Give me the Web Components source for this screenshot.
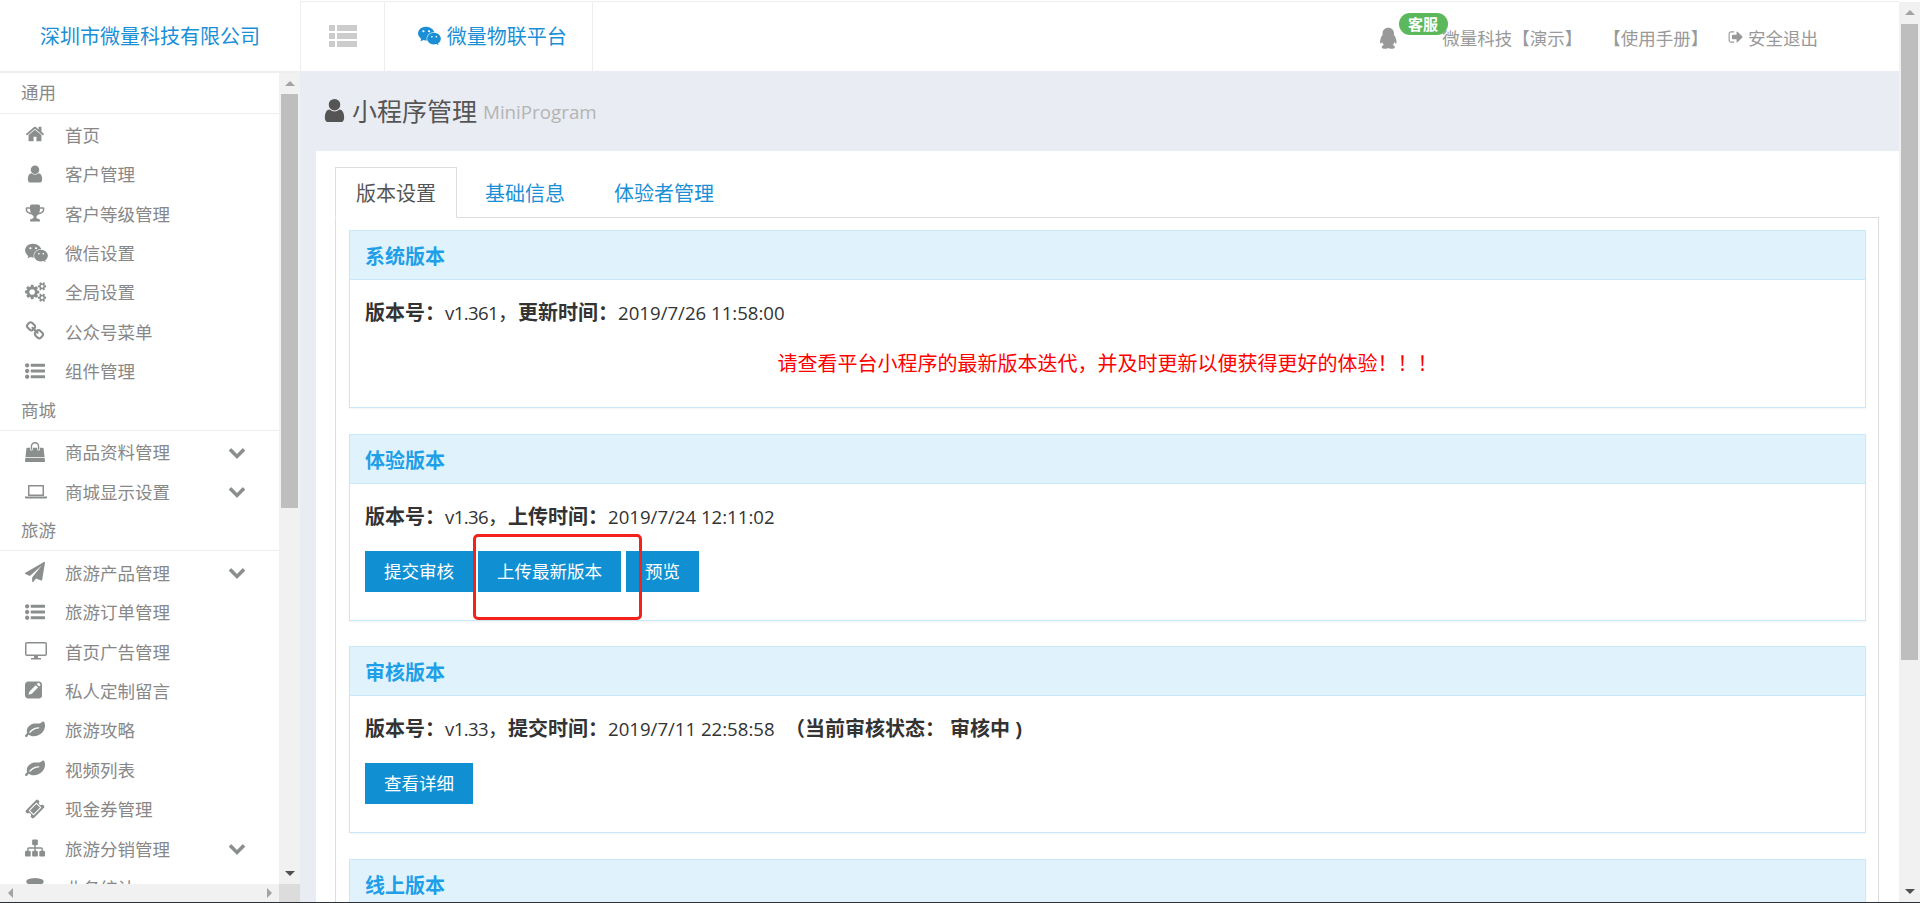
<!DOCTYPE html>
<html lang="zh">
<head>
<meta charset="utf-8">
<title>小程序管理</title>
<style>
  html, body { margin: 0; height: 903px; overflow: hidden; background: #fff; }
  body { font-family: "Open Sans", "Noto Sans CJK SC", sans-serif; font-size: 17.5px; color: #333; }
</style>
</head>
<body>
<app-shell>
  <top-bar slot="top"></top-bar>
  <side-nav slot="side">
    <nav-label>通用</nav-label>
    <nav-item icon="home">首页</nav-item>
    <nav-item icon="user">客户管理</nav-item>
    <nav-item icon="trophy">客户等级管理</nav-item>
    <nav-item icon="wechat">微信设置</nav-item>
    <nav-item icon="gears">全局设置</nav-item>
    <nav-item icon="link">公众号菜单</nav-item>
    <nav-item icon="list">组件管理</nav-item>
    <nav-label>商城</nav-label>
    <nav-item icon="bag" more>商品资料管理</nav-item>
    <nav-item icon="laptop" more>商城显示设置</nav-item>
    <nav-label>旅游</nav-label>
    <nav-item icon="plane" more>旅游产品管理</nav-item>
    <nav-item icon="list">旅游订单管理</nav-item>
    <nav-item icon="desktop">首页广告管理</nav-item>
    <nav-item icon="pencil">私人定制留言</nav-item>
    <nav-item icon="leaf">旅游攻略</nav-item>
    <nav-item icon="leaf">视频列表</nav-item>
    <nav-item icon="ticket">现金券管理</nav-item>
    <nav-item icon="sitemap" more>旅游分销管理</nav-item>
    <nav-item icon="database">业务统计</nav-item>
  </side-nav>
  <main-pane slot="main">
    <ver-panel heading="系统版本">
      <b>版本号&#xFF1A;</b><span class="ver">v1.361</span>&#xFF0C;<b>更新时间&#xFF1A;</b><span class="num">2019/7/26 11:58:00</span>
      <p slot="note">请查看平台小程序的最新版本迭代&#xFF0C;并及时更新以便获得更好的体验&#xFF01;&#xFF01;&#xFF01;</p>
    </ver-panel>
    <ver-panel heading="体验版本">
      <b>版本号&#xFF1A;</b><span class="ver">v1.36</span>&#xFF0C;<b>上传时间&#xFF1A;</b><span class="num">2019/7/24 12:11:02</span>
      <btn-row slot="actions" marked>
        <act-btn>提交审核</act-btn><act-btn>上传最新版本</act-btn><act-btn>预览</act-btn>
      </btn-row>
    </ver-panel>
    <ver-panel heading="审核版本">
      <b>版本号&#xFF1A;</b><span class="ver">v1.33</span>&#xFF0C;<b>提交时间&#xFF1A;</b><span class="num">2019/7/11 22:58:58</span>&nbsp; <b>&#xFF08;当前审核状态&#xFF1A; 审核中 )</b>
      <btn-row slot="actions"><act-btn>查看详细</act-btn></btn-row>
    </ver-panel>
    <ver-panel heading="线上版本"></ver-panel>
  </main-pane>
  <v-scroll slot="page" before="1" len="636"></v-scroll>
</app-shell>

<script>
const ICONS = {
  home: ['0 0 1792 1792', 'M1472 992v480q0 26-19 45t-45 19h-384v-384h-256v384h-384q-26 0-45-19t-19-45v-480q0-1 .5-3t.5-3l575-474 575 474q1 2 1 6zm223-69l-62 74q-8 9-21 11h-3q-13 0-21-7l-692-577-692 577q-12 8-24 7-13-2-21-11l-62-74q-8-10-7-23.5t11-21.5l719-599q32-26 76-26t76 26l244 204v-195q0-14 9-23t23-9h192q14 0 23 9t9 23v408l219 182q10 8 11 21.5t-7 23.5z'],
  user: ['0 0 1792 1792', 'M1536 1399q0 109-62.5 187t-150.5 78h-854q-88 0-150.5-78t-62.5-187q0-85 8.5-160.5t31.5-152 58.5-131 94-89 134.5-34.5q131 128 313 128t313-128q76 0 134.5 34.5t94 89 58.5 131 31.5 152 8.5 160.5zm-256-887q0 159-112.5 271.5t-271.5 112.5-271.5-112.5-112.5-271.5 112.5-271.5 271.5-112.5 271.5 112.5 112.5 271.5z'],
  trophy: ['0 0 1792 1792', 'M522 883q-74-162-74-371h-256v96q0 78 94.5 162t235.5 113zm1078-275v-96h-256q0 209-74 371 141-29 235.5-113t94.5-162zm128-128v128q0 71-41.5 143t-112 130-173 97.5-215.5 44.5q-42 54-95 95-38 34-52.5 72.5t-14.5 89.5q0 54 30.5 91t97.5 37q75 0 133.5 45.5t58.5 114.5v64q0 14-9 23t-23 9h-832q-14 0-23-9t-9-23v-64q0-69 58.5-114.5t133.5-45.5q67 0 97.5-37t30.5-91q0-51-14.5-89.5t-52.5-72.5q-53-41-95-95-113-5-215.5-44.5t-173-97.5-112-130-41.5-143v-128q0-40 28-68t68-28h288v-96q0-66 47-113t113-47h576q66 0 113 47t47 113v96h288q40 0 68 28t28 68z'],
  wechat: ['0 0 2048 1792', 'M580 461q0-41-25-66t-66-25q-43 0-76 25.5t-33 65.5q0 39 33 64.5t76 25.5q41 0 66-24.5t25-65.5zm743 507q0-28-25.5-50t-65.5-22q-27 0-49.5 22.5t-22.5 49.5q0 28 22.5 50.5t49.5 22.5q40 0 65.5-22t25.5-51zm-236-507q0-41-24.5-66t-65.5-25q-43 0-76 25.5t-33 65.5q0 39 33 64.5t76 25.5q41 0 65.5-24.5t24.5-65.5zm635 507q0-28-26-50t-65-22q-27 0-49.5 22.5t-22.5 49.5q0 28 22.5 50.5t49.5 22.5q39 0 65-22t26-51zm-266-397q-31-4-70-4-169 0-311 77t-223.5 208.5-81.5 287.5q0 78 23 152-35 3-68 3-26 0-50-1.5t-55-6.5-44.5-7-54.5-10.5-50-10.5l-253 127 72-218q-290-203-290-490 0-169 97.5-311t264-223.5 363.5-81.5q176 0 332.5 66t262 182.5 136.5 260.5zm592 561q0 117-68.5 223.5t-185.5 193.5l55 181-199-109q-150 37-218 37-169 0-311-70.5t-223.5-191.5-81.5-264 81.5-264 223.5-191.5 311-70.5q161 0 303 70.5t227.5 191.5 85.5 264z'],
  gears: ['0 0 1920 1792', 'M896 896q0-106-75-181t-181-75-181 75-75 181 75 181 181 75 181-75 75-181zm768 512q0-52-38-90t-90-38-90 38-38 90q0 53 37.5 90.5t90.5 37.5 90.5-37.5 37.5-90.5zm0-1024q0-52-38-90t-90-38-90 38-38 90q0 53 37.5 90.5t90.5 37.5 90.5-37.5 37.5-90.5zm-384 421v185q0 10-7 19.5t-16 10.5l-155 24q-11 35-32 76 34 48 90 115 7 11 7 20 0 12-7 19-23 30-82.5 89.5t-78.5 59.5q-11 0-21-7l-115-90q-37 19-77 31-11 108-23 155-7 24-30 24h-186q-11 0-20-7.5t-10-17.5l-23-153q-34-10-75-31l-118 89q-7 7-20 7-11 0-21-8-144-133-144-160 0-9 7-19 10-14 41-53t47-61q-23-44-35-82l-152-24q-10-1-17-9.5t-7-19.5v-185q0-10 7-19.5t16-10.5l155-24q11-35 32-76-34-48-90-115-7-11-7-20 0-12 7-20 22-30 82-89t79-59q11 0 21 7l115 90q34-18 77-32 11-108 23-154 7-24 30-24h186q11 0 20 7.5t10 17.5l23 153q34 10 75 31l118-89q8-7 20-7 11 0 21 8 144 133 144 160 0 8-7 19-12 16-42 54t-45 60q23 48 34 82l152 23q10 2 17 10.5t7 19.5zm640 533v140q0 16-149 31-12 27-30 52 51 113 51 138 0 4-4 7-122 71-124 71-8 0-46-47t-52-68q-20 2-30 2t-30-2q-14 21-52 68t-46 47q-2 0-124-71-4-3-4-7 0-25 51-138-18-25-30-52-149-15-149-31v-140q0-16 149-31 13-29 30-52-51-113-51-138 0-4 4-7 4-2 35-20t59-34 30-16q8 0 46 46.5t52 67.5q20-2 30-2t30 2q51-71 92-112l6-2q4 0 124 70 4 3 4 7 0 25-51 138 17 23 30 52 149 15 149 31zm0-1024v140q0 16-149 31-12 27-30 52 51 113 51 138 0 4-4 7-122 71-124 71-8 0-46-47t-52-68q-20 2-30 2t-30-2q-14 21-52 68t-46 47q-2 0-124-71-4-3-4-7 0-25 51-138-18-25-30-52-149-15-149-31v-140q0-16 149-31 13-29 30-52-51-113-51-138 0-4 4-7 4-2 35-20t59-34 30-16q8 0 46 46.5t52 67.5q20-2 30-2t30 2q51-71 92-112l6-2q4 0 124 70 4 3 4 7 0 25-51 138 17 23 30 52 149 15 149 31z'],
  link: ['0 0 1792 1792', 'M1520 1216q0-40-28-68l-208-208q-28-28-68-28-42 0-72 32 3 3 19 18.5t21.5 21.5 15 19 13 25.5 3.5 27.5q0 40-28 68t-68 28q-15 0-27.5-3.5t-25.5-13-19-15-21.5-21.5-18.5-19q-33 31-33 73 0 40 28 68l206 207q27 27 68 27 40 0 68-26l147-146q28-28 28-67zm-703-705q0-40-28-68l-206-207q-28-28-68-28-39 0-68 27l-147 146q-28 28-28 67 0 40 28 68l208 208q27 27 68 27 42 0 72-31-3-3-19-18.5t-21.5-21.5-15-19-13-25.5-3.5-27.5q0-40 28-68t68-28q15 0 27.5 3.5t25.5 13 19 15 21.5 21.5 18.5 19q33-31 33-73zm895 705q0 120-85 203l-147 146q-83 83-203 83-121 0-204-85l-206-207q-83-83-83-203 0-123 88-209l-88-88q-86 88-208 88-120 0-204-84l-208-208q-84-84-84-204t85-203l147-146q83-83 203-83 121 0 204 85l206 207q83 83 83 203 0 123-88 209l88 88q86-88 208-88 120 0 204 84l208 208q84 84 84 204z'],
  list: ['0 0 1792 1792', 'M384 1408q0 80-56 136t-136 56-136-56-56-136 56-136 136-56 136 56 56 136zm0-512q0 80-56 136t-136 56-136-56-56-136 56-136 136-56 136 56 56 136zm1408 416v192q0 13-9.5 22.5t-22.5 9.5h-1216q-13 0-22.5-9.5t-9.5-22.5v-192q0-13 9.5-22.5t22.5-9.5h1216q13 0 22.5 9.5t9.5 22.5zm-1408-928q0 80-56 136t-136 56-136-56-56-136 56-136 136-56 136 56 56 136zm1408 416v192q0 13-9.5 22.5t-22.5 9.5h-1216q-13 0-22.5-9.5t-9.5-22.5v-192q0-13 9.5-22.5t22.5-9.5h1216q13 0 22.5 9.5t9.5 22.5zm0-512v192q0 13-9.5 22.5t-22.5 9.5h-1216q-13 0-22.5-9.5t-9.5-22.5v-192q0-13 9.5-22.5t22.5-9.5h1216q13 0 22.5 9.5t9.5 22.5z'],
  bag: ['0 0 1792 1792', 'M1757 1408l35 313q3 28-16 50-19 21-48 21h-1664q-29 0-48-21-19-22-16-50l35-313h1722zm-93-839l86 775h-1708l86-775q3-24 21-40.5t43-16.5h256v128q0 53 37.5 90.5t90.5 37.5 90.5-37.5 37.5-90.5v-128h384v128q0 53 37.5 90.5t90.5 37.5 90.5-37.5 37.5-90.5v-128h256q25 0 43 16.5t21 40.5zm-384-185v256q0 26-19 45t-45 19-45-19-19-45v-256q0-106-75-181t-181-75-181 75-75 181v256q0 26-19 45t-45 19-45-19-19-45v-256q0-159 112.5-271.5t271.5-112.5 271.5 112.5 112.5 271.5z'],
  laptop: ['0 0 22 20', 'M3 4h16v11H3z M4.5 5.5v8h13v-8z M0 15.5h22v1a1 1 0 0 1-1 1H1a1 1 0 0 1-1-1z'],
  plane: ['0 0 1792 1792', 'M1764 11q33 24 27 64l-256 1536q-5 29-32 45-14 8-31 8-11 0-24-5l-453-185-242 295q-18 23-49 23-13 0-22-4-19-7-30.5-23.5t-11.5-36.5v-349l864-1059-1069 925-395-162q-37-14-40-55-2-40 32-59l1664-960q15-9 32-9 20 0 36 11z'],
  desktop: ['0 -1 22 20', 'M2 0h18a2 2 0 0 1 2 2v10a2 2 0 0 1-2 2H13v2h3v1.5H6V16h3v-2H2a2 2 0 0 1-2-2V2a2 2 0 0 1 2-2z M2 1.5a.5.5 0 0 0-.5.5v10a.5.5 0 0 0 .5.5h18a.5.5 0 0 0 .5-.5V2a.5.5 0 0 0-.5-.5z'],
  pencil: ['0 0 1536 1792', 'M288 128h960q119 0 203.5 84.5t84.5 203.5v960q0 119-84.5 203.5t-203.5 84.5h-960q-119 0-203.5-84.5t-84.5-203.5v-960q0-119 84.5-203.5t203.5-84.5zm672 340l-560 560-90 300 300-90 560-560zm96-96l210 210 96-96q28-28 28-58t-28-58l-94-94q-28-28-58-28t-58 28z'],
  leaf: ['0 0 1792 1792', 'M1280 704q0-26-19-45t-45-19q-172 0-318 49.5t-259.5 134-235.5 219.5q-19 21-19 45 0 26 19 45t45 19q24 0 45-19 27-24 74-71t67-66q137-124 268.5-176t313.5-52q26 0 45-19t19-45zm512-198q0 95-20 193-46 224-184.5 383t-357.5 268q-214 108-438 108-148 0-286-47-15-5-88-42t-96-37q-16 0-39.5 32t-45 70-52.5 70-60 32q-30 0-51-11t-31-24-27-42q-2-4-6-11t-5.5-10-3-9.5-1.5-13.5q0-35 31-73.5t68-65.5 68-56 31-48q0-4-14-38t-16-44q-9-51-9-104 0-115 43.5-220t119-184.5 170.5-139 204-95.5q55-18 145-25.5t179.5-9 178.5-6 163.5-24 113.5-56.5l29.5-29.5 29.5-28 27-20 36.5-16 43.5-4.5q39 0 70.5 46t47.5 112 24 124 8 96z'],
  ticket: ['0 0 1792 1792', 'M1024 452l316 316-572 572-316-316zm-211 979l618-618q19-19 19-45t-19-45l-362-362q-18-18-45-18t-45 18l-618 618q-19 19-19 45t19 45l362 362q18 18 45 18t45-18zm889-637l-907 908q-37 37-90.5 37t-90.5-37l-126-126q56-56 56-136t-56-136-136-56-136 56l-125-126q-37-37-37-90.5t37-90.5l907-906q37-37 90.5-37t90.5 37l125 125q-56 56-56 136t56 136 136 56 136-56l126 125q37 37 37 90.5t-37 90.5z'],
  sitemap: ['0 0 1792 1792', 'M1792 1248v320q0 40-28 68t-68 28h-320q-40 0-68-28t-28-68v-320q0-40 28-68t68-28h96v-192h-512v192h96q40 0 68 28t28 68v320q0 40-28 68t-68 28h-320q-40 0-68-28t-28-68v-320q0-40 28-68t68-28h96v-192h-512v192h96q40 0 68 28t28 68v320q0 40-28 68t-68 28h-320q-40 0-68-28t-28-68v-320q0-40 28-68t68-28h96v-192q0-52 38-90t90-38h512v-192h-96q-40 0-68-28t-28-68v-320q0-40 28-68t68-28h320q40 0 68 28t28 68v320q0 40-28 68t-68 28h-96v192h512q52 0 90 38t38 90v192h96q40 0 68 28t28 68z'],
  database: ['0 0 1792 1792', 'M896 768q237 0 443-43t325-127v170q0 69-103 128t-280 93.5-385 34.5-385-34.5-280-93.5-103-128v-170q119 84 325 127t443 43zm0 768q237 0 443-43t325-127v170q0 69-103 128t-280 93.5-385 34.5-385-34.5-280-93.5-103-128v-170q119 84 325 127t443 43zm0-384q237 0 443-43t325-127v170q0 69-103 128t-280 93.5-385 34.5-385-34.5-280-93.5-103-128v-170q119 84 325 127t443 43zm0-1152q208 0 385 34.5t280 93.5 103 128v128q0 69-103 128t-280 93.5-385 34.5-385-34.5-280-93.5-103-128v-128q0-69 103-128t280-93.5 385-34.5z'],
  chevron: ['0 0 1792 1792', 'M1683 808l-742 741q-19 19-45 19t-45-19l-742-741q-19-19-19-45.5t19-45.5l166-165q19-19 45-19t45 19l531 531 531-531q19-19 45-19t45 19l166 165q19 19 19 45.5t-19 45.5z'],
  signout: ['0 0 1664 1792', 'M704 1440q0 4 1 20t.5 26.5-3 23.5-10 19.5-20.5 6.5h-320q-119 0-203.5-84.5t-84.5-203.5v-704q0-119 84.5-203.5t203.5-84.5h320q13 0 22.5 9.5t9.5 22.5q0 4 1 20t.5 26.5-3 23.5-10 19.5-20.5 6.5h-320q-66 0-113 47t-47 113v704q0 66 47 113t113 47h312l11.5 1 11.5 3 8 5.5 7 9 2 13.5zm928-544q0 26-19 45l-544 544q-19 19-45 19t-45-19-19-45v-288h-448q-26 0-45-19t-19-45v-384q0-26 19-45t45-19h448v-288q0-26 19-45t45-19 45 19l544 544q19 19 19 45z'],
  qq: ['0 0 1536 1792', 'M768 64c-270 0-430 190-430 430 0 40 4 70 8 96-70 60-110 130-130 210-50 170-90 350-50 420 30 40 90-20 140-100 20 90 70 170 140 230-70 30-170 80-170 160 0 90 170 130 300 120 90-10 150-40 192-70 42 30 102 60 192 70 130 10 300-30 300-120 0-80-100-130-170-160 70-60 120-140 140-230 50 80 110 140 140 100 40-70 0-250-50-420-20-80-60-150-130-210 4-26 8-56 8-96 0-240-160-430-430-430z'],
  thlist: ['0 0 28 22', 'M0 0h6v6H0zM8 0h20v6H8zM0 8h6v6H0zM8 8h20v6H8zM0 16h6v6H0zM8 16h20v6H8z']
};

function iconSvg(name, size, color) {
  const [box, d] = ICONS[name];
  const [, , w, h] = box.split(' ').map(Number);
  const width = (size * w / h).toFixed(2);
  return `<svg xmlns="http://www.w3.org/2000/svg" viewBox="${box}" width="${width}" height="${size}" fill="${color}" style="display:block;flex:none"><path d="${d}"/></svg>`;
}

class AppShell extends HTMLElement {
  connectedCallback() {
    this.attachShadow({ mode: 'open' });
    this.shadowRoot.innerHTML = `
      <style>
        :host {
          display: grid;
          grid-template-columns: 300px 1fr 21px;
          grid-template-rows: 73px 1fr 1px;
          height: 903px;
          overflow: hidden;
        }
        .top { grid-column: 1 / 3; grid-row: 1; min-width: 0; }
        .side { grid-column: 1; grid-row: 2; min-height: 0; }
        .main { grid-column: 2; grid-row: 2; min-width: 0; min-height: 0; margin-top: -2px; }
        .page { grid-column: 3; grid-row: 1 / 3; padding-top: 2px; display: flex; }
        .edge { grid-column: 1 / 4; grid-row: 3; background: #2b3136; }
      </style>
      <div class="top"><slot name="top"></slot></div>
      <div class="side"><slot name="side"></slot></div>
      <div class="main"><slot name="main"></slot></div>
      <div class="page"><slot name="page"></slot></div>
      <div class="edge"></div>
    `;
  }
}
customElements.define('app-shell', AppShell);

class TopBar extends HTMLElement {
  connectedCallback() {
    this.attachShadow({ mode: 'open' });
    this.shadowRoot.innerHTML = `
      <style>
        :host {
          display: flex;
          height: 73px;
          box-sizing: border-box;
          padding-top: 1px;
          background: #fff;
          color: #999;
        }
        .cell { display: flex; align-items: center; justify-content: center; height: 70px; box-sizing: border-box; padding-bottom: 3px; }
        .logo { width: 300px; font-size: 20px; color: #1a8fd6; border-bottom: 2px solid #eee; height: 72px; margin-top: 0; padding-bottom: 2px; }
        .rest { flex: 1; display: flex; border-top: 1px solid #eee; }
        .menu { width: 84px; border-left: 1px solid #eee; }
        .plat { width: 209px; border-left: 1px solid #eee; border-right: 1px solid #eee; justify-content: flex-start; padding-left: 33px; gap: 6px; font-size: 20px; color: #1a8fd6; }
        .right { margin-left: auto; display: flex; align-items: center; height: 70px; padding: 0 81px 3px 0; font-size: 17.5px; }
        .qq { position: relative; margin-right: 44px; padding-top: 3px; }
        .badge {
          position: absolute;
          left: 21px;
          top: -11px;
          width: 49px;
          height: 22px;
          border-radius: 11px;
          background: #5cb85c;
          color: #fff;
          font-size: 15px;
          font-weight: 700;
          line-height: 22px;
          text-align: center;
        }
        .who { margin-right: 21px; }
        .help { margin-right: 20px; }
        .out { display: flex; align-items: center; gap: 5px; }
      </style>
      <div class="cell logo">深圳市微量科技有限公司</div>
      <div class="rest">
        <div class="cell menu">${iconSvg('thlist', 22, '#cccccc')}</div>
        <div class="cell plat">${iconSvg('wechat', 20, '#1a8fd6')}<span>微量物联平台</span></div>
        <div class="right">
          <span class="qq">${iconSvg('qq', 24, '#999999')}<span class="badge">客服</span></span>
          <span class="who">微量科技【演示】</span>
          <span class="help">【使用手册】</span>
          <span class="out">${iconSvg('signout', 16, '#999999')}<span>安全退出</span></span>
        </div>
      </div>
    `;
  }
}
customElements.define('top-bar', TopBar);

class SideNav extends HTMLElement {
  connectedCallback() {
    this.attachShadow({ mode: 'open' });
    this.shadowRoot.innerHTML = `
      <style>
        :host {
          display: grid;
          grid-template-columns: 279px 21px;
          grid-template-rows: 1fr 18px;
          height: 100%;
          background: #fff;
        }
        .list { overflow: hidden; min-height: 0; }
        .bar { background: #f1f1f1; display: flex; align-items: center; justify-content: space-between; padding: 0 7px 0 8px; }
        .corner { background: #dcdcdc; }
        i { width: 0; height: 0; border-top: 5px solid transparent; border-bottom: 5px solid transparent; display: block; }
        .l { border-right: 5px solid #a3a3a3; }
        .r { border-left: 5px solid #a3a3a3; }
      </style>
      <div class="list"><slot></slot></div>
      <v-scroll before="0" len="414"></v-scroll>
      <div class="bar"><i class="l"></i><i class="r"></i></div>
      <div class="corner"></div>
    `;
  }
}
customElements.define('side-nav', SideNav);

class NavLabel extends HTMLElement {
  connectedCallback() {
    this.attachShadow({ mode: 'open' });
    this.shadowRoot.innerHTML = `
      <style>
        :host {
          display: block;
          height: 40.5px;
          margin-bottom: 1px;
          line-height: 38px;
          box-sizing: border-box;
          padding-left: 21px;
          border-bottom: 1px solid #eee;
          font-size: 17.5px;
          color: #888;
        }
      </style>
      <slot></slot>
    `;
  }
}
customElements.define('nav-label', NavLabel);

class NavItem extends HTMLElement {
  connectedCallback() {
    this.attachShadow({ mode: 'open' });
    const name = this.getAttribute('icon');
    const more = this.hasAttribute('more');
    this.shadowRoot.innerHTML = `
      <style>
        :host {
          display: flex;
          align-items: center;
          height: 39.45px;
          font-size: 17.5px;
          color: #888;
        }
        .ic { width: 40px; margin-left: 25px; flex: none; }
        .more { margin-left: auto; margin-right: 33px; }
      </style>
      <span class="ic">${iconSvg(name, 20, '#8a8f8d')}</span>
      <span><slot></slot></span>
      ${more ? `<span class="more">${iconSvg('chevron', 18, '#8a8f8d')}</span>` : ''}
    `;
  }
}
customElements.define('nav-item', NavItem);

class VScroll extends HTMLElement {
  connectedCallback() {
    this.attachShadow({ mode: 'open' });
    const before = this.getAttribute('before') || 0;
    const len = this.getAttribute('len') || 100;
    this.shadowRoot.innerHTML = `
      <style>
        :host {
          display: flex;
          flex-direction: column;
          width: 21px;
          background: #f1f1f1;
          height: 100%;
        }
        .arrow { height: 21px; flex: none; display: flex; align-items: center; justify-content: center; }
        .thumb { background: #bebebe; margin: ${before}px 2px 0; height: ${len}px; flex: none; }
        .fill { flex: 1; }
        i { display: block; width: 0; height: 0; border-left: 5px solid transparent; border-right: 5px solid transparent; }
        .up { border-bottom: 5px solid #a3a3a3; }
        .down { border-top: 5px solid #505050; }
      </style>
      <div class="arrow"><i class="up"></i></div>
      <div class="thumb"></div>
      <div class="fill"></div>
      <div class="arrow"><i class="down"></i></div>
    `;
  }
}
customElements.define('v-scroll', VScroll);

class MainPane extends HTMLElement {
  connectedCallback() {
    this.attachShadow({ mode: 'open' });
    this.shadowRoot.innerHTML = `
      <style>
        :host {
          display: flex;
          flex-direction: column;
          height: 100%;
          background: #e9ecf3;
          overflow: hidden;
        }
        .head {
          height: 80px;
          flex: none;
          box-sizing: border-box;
          padding: 0 0 2px 21px;
          display: flex;
          align-items: center;
          gap: 4px;
          color: #555;
          font-size: 25px;
        }
        .head small { font-size: 18.75px; color: #b4b4b4; margin-left: 2px; padding-top: 2px; }
        .card { flex: 1; margin-left: 16px; background: #fff; padding: 16px 20px 0 19px; min-height: 0; display: flex; flex-direction: column; }
        .tabs { display: flex; gap: 7px; height: 51px; flex: none; margin-bottom: -1px; position: relative; z-index: 1; }
        .tab {
          padding: 0 20px;
          box-sizing: border-box;
          border: 1px solid transparent;
          font-size: 20px;
          line-height: 52px;
          text-align: center;
          color: #1a8fd6;
        }
        .tab.on { color: #555; border-color: #ddd; border-bottom-color: #fff; background: #fff; }
        .pane { flex: 1; border: 1px solid #ddd; border-bottom: 0; padding: 12px 12px 0 13px; min-height: 0; display: flex; flex-direction: column; gap: 25.6px; }
      </style>
      <div class="head">${iconSvg('user', 27, '#555555')}<span>小程序管理</span><small>MiniProgram</small></div>
      <div class="card">
        <div class="tabs"><div class="tab on">版本设置</div><div class="tab">基础信息</div><div class="tab">体验者管理</div></div>
        <div class="pane"><slot></slot></div>
      </div>
    `;
  }
}
customElements.define('main-pane', MainPane);

class VerPanel extends HTMLElement {
  connectedCallback() {
    this.attachShadow({ mode: 'open' });
    this.shadowRoot.innerHTML = `
      <style>
        :host {
          display: block;
          flex: none;
          box-sizing: border-box;
          border: 1px solid #c8e9fb;
          box-shadow: 0 1px 2px rgba(0,0,0,.05);
          background: #fff;
        }
        .title {
          height: 49px;
          box-sizing: border-box;
          background: #e0f3fd;
          border-bottom: 1px solid #c8e9fb;
          padding-left: 15px;
          font-size: 20px;
          font-weight: 700;
          line-height: 51px;
          color: #1e9fe8;
        }
        .body { padding: 16px 15px 0; }
        .line { height: 30px; line-height: 33px; font-size: 20px; color: #333; white-space: nowrap; }
        ::slotted(.num) { font-size: 18.6px; }
        ::slotted(.ver) { font-size: 18.6px; letter-spacing: -.6px; }
        ::slotted(p) { margin: 0; padding: 18px 0 0; text-align: center; color: #f00; font-size: 20px; line-height: 40px; height: 81px; box-sizing: border-box; }
        ::slotted(btn-row) { margin-top: 21px; margin-bottom: 28px; }
      </style>
      <div class="title">${this.getAttribute('heading')}</div>
      <div class="body">
        <div class="line"><slot></slot></div>
        <slot name="note"></slot>
        <slot name="actions"></slot>
      </div>
    `;
  }
}
customElements.define('ver-panel', VerPanel);

class BtnRow extends HTMLElement {
  connectedCallback() {
    this.attachShadow({ mode: 'open' });
    this.shadowRoot.innerHTML = `
      <style>
        :host { display: flex; gap: 5px; position: relative; }
        .mark {
          position: absolute;
          left: 108px;
          top: -17px;
          width: 169px;
          height: 86px;
          box-sizing: border-box;
          border: 3px solid #f5221a;
          border-radius: 5px;
        }
      </style>
      <slot></slot>
      ${this.hasAttribute('marked') ? '<div class="mark"></div>' : ''}
    `;
  }
}
customElements.define('btn-row', BtnRow);

class ActBtn extends HTMLElement {
  connectedCallback() {
    this.attachShadow({ mode: 'open' });
    this.shadowRoot.innerHTML = `
      <style>
        :host {
          display: block;
          height: 41px;
          padding: 0 19px;
          background: #1090d3;
          color: #fff;
          font-size: 17.5px;
          line-height: 41px;
        }
      </style>
      <slot></slot>
    `;
  }
}
customElements.define('act-btn', ActBtn);
</script>
</body>
</html>
